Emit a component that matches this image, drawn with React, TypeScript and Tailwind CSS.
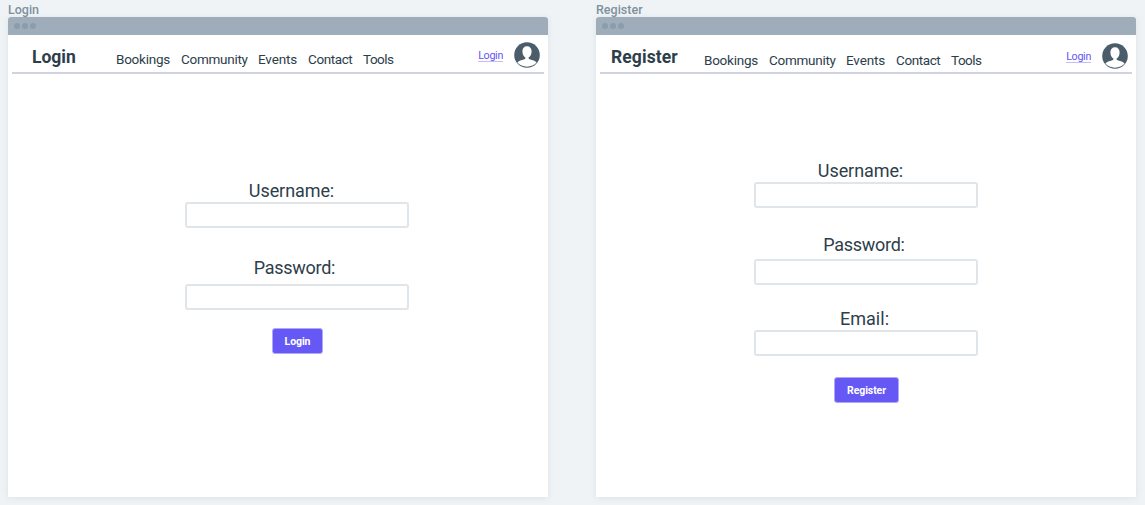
type Field = { label: string; labelClass: string };

type ScreenProps = {
  name: string;
  titleClass: string;
  navClass: string;
  accountClass: string;
  fields: Field[];
  formClass: string;
  buttonClass: string;
};

const links = [
  { text: "Bookings", style: "w-[65px] tracking-[-0.25px]" },
  { text: "Community", style: "w-[77px] tracking-[-0.28px]" },
  { text: "Events", style: "w-[50px] tracking-[-0.15px]" },
  { text: "Contact", style: "w-[55px] tracking-[-0.4px]" },
  { text: "Tools", style: "w-[40px] tracking-[-0.5px]" },
];

function Avatar() {
  return (
    <svg viewBox="0 0 26 26" className="h-[26px] w-[26px] shrink-0">
      <circle cx="13" cy="13" r="12.8" fill="#4b5d6b" />
      <path
        d="M3.4 20.6C4.6 18.9 7.300 18.200 10.300 17.300C11.400 17 11.500 16.400 11.400 15.500C9.400 14.500 8.400 12 8.400 9.300C8.400 6.200 10.100 4.200 13 4.200S17.600 6.200 17.600 9.300C17.600 12 16.600 14.500 14.600 15.500C14.500 16.400 14.600 17 15.700 17.300C18.700 18.200 21.400 18.900 22.600 20.600C20.400 23.400 17 24.700 13 24.700S5.600 23.400 3.400 20.600Z"
        fill="#fff"
      />
    </svg>
  );
}

function Screen(p: ScreenProps) {
  return (
    <section className="w-[540px] shrink-0">
      <div className="h-[17px] pt-px text-[12.5px] leading-[18px] font-medium text-[#7f909e]">
        {p.name}
      </div>
      <div className="h-[480px] rounded-t-[3px] bg-white shadow-[0_1px_6px_rgba(60,80,100,0.10)]">
        <div className="flex h-[18px] items-center gap-[2px] rounded-t-[3px] bg-[#9eadb9] pl-[6px]">
          <i className="h-[6px] w-[6px] rounded-full bg-[#8b9daa]" />
          <i className="h-[6px] w-[6px] rounded-full bg-[#8b9daa]" />
          <i className="h-[6px] w-[6px] rounded-full bg-[#8b9daa]" />
        </div>
        <header className="mx-1 flex h-[39px] items-start border-b-2 border-[#d1d3e0]">
          <h1 className={p.titleClass}>{p.name}</h1>
          <nav className={p.navClass}>
            {links.map((l) => (
              <a key={l.text} className={l.style}>
                {l.text}
              </a>
            ))}
          </nav>
          <div className={p.accountClass}>
            <a className="mt-[7px] h-[13px] border-b border-[#c5bcfb] text-[10.7px] leading-[13px] tracking-[-0.3px] text-[#6554f5]">
              Login
            </a>
            <Avatar />
          </div>
        </header>
        <form className={p.formClass} onSubmit={(e) => e.preventDefault()}>
          {p.fields.map((f) => (
            <label key={f.label} className="flex flex-col items-center">
              <span className={f.labelClass}>{f.label}</span>
              <input className="h-[26px] w-[224px] rounded-[3px] border-2 border-[#e0e5e9] bg-white outline-none" />
            </label>
          ))}
          <button className={p.buttonClass}>{p.name}</button>
        </form>
      </div>
    </section>
  );
}

const loginFields: Field[] = [
  {
    label: "Username:",
    labelClass: "mr-[11px] h-[21px] text-[18px] leading-[20px] tracking-[-0.08px]",
  },
  {
    label: "Password:",
    labelClass: "mt-[30px] mr-[5px] h-[26px] text-[18px] leading-[20px] tracking-[-0.28px]",
  },
];

const registerFields: Field[] = [
  {
    label: "Username:",
    labelClass: "mr-[11px] h-[21px] text-[18px] leading-[20px] tracking-[-0.08px]",
  },
  {
    label: "Password:",
    labelClass: "mt-[27px] mr-[4px] h-[24px] text-[18px] leading-[20px] tracking-[-0.28px]",
  },
  {
    label: "Email:",
    labelClass: "mt-[24px] mr-[3px] h-[21px] text-[18px] leading-[20px] tracking-[0.05px]",
  },
];

export default function App() {
  return (
    <main className="flex h-[505px] w-[1145px] gap-12 overflow-hidden bg-[#eff3f6] pl-2 font-['Roboto',sans-serif] text-[#2d3e4b]">
      <Screen
        name="Login"
        titleClass="w-[104px] pt-[12px] pl-[20px] text-[17.5px] leading-[20px] font-bold"
        navClass="flex pt-[14px] text-[13.5px] leading-[20px]"
        accountClass="ml-auto flex gap-[11px] pt-[7px] pr-[4px]"
        fields={loginFields}
        formClass="flex flex-col items-center pt-[107px] pl-[38px]"
        buttonClass="mt-[18px] ml-px h-[26px] w-[51px] rounded-[3px] border border-[#b0a9fa] bg-[#6658f5] pt-px text-[10.5px] font-bold tracking-[-0.1px] text-white"
      />
      <Screen
        name="Register"
        titleClass="w-[104px] pt-[12px] pl-[11px] text-[17.5px] leading-[20px] font-bold tracking-[0.1px]"
        navClass="flex pt-[15px] text-[13.5px] leading-[20px]"
        accountClass="ml-auto flex gap-[11px] pt-[8px] pr-[4px]"
        fields={registerFields}
        formClass="flex flex-col items-center pt-[87px]"
        buttonClass="mt-[21px] ml-px h-[26px] w-[65px] rounded-[3px] border border-[#b0a9fa] bg-[#6658f5] pt-px text-[10.5px] font-bold tracking-[-0.1px] text-white"
      />
    </main>
  );
}
